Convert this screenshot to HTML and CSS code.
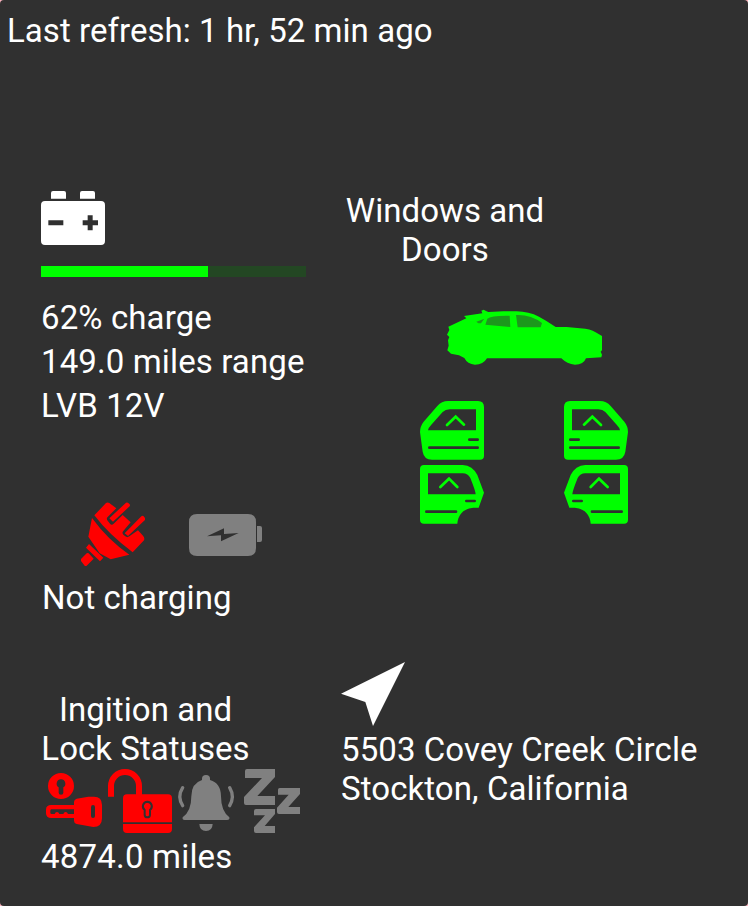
FILE: index.html
```html
<!DOCTYPE html>
<html lang="en">
<head>
<meta charset="utf-8">
<title>Vehicle status</title>
<link rel="stylesheet" href="styles.css">
</head>
<body>
<main class="widget">
  <header class="refresh">Last refresh: 1 hr, 52 min ago</header>
  <div class="columns">
    <div class="left">
      <section class="battery">
        <svg class="battery-icon" viewBox="33 33 192 162" fill="#fff">
          <path d="M63 56V39q0-6 6-6h33q6 0 6 6v17zM150 56V39q0-6 6-6h33q6 0 6 6v17z"/>
          <path fill-rule="evenodd" d="M45 63H213q12 0 12 12V183q0 12-12 12H45q-12 0-12-12V75q0-12 12-12zM55 121V136H100V121zM173 106V121H158V136H173V151H188V136H204V121H188V106z"/>
        </svg>
        <div class="bar"><div class="level" style="width:63%"></div></div>
        <div class="stats">
          <div>62% charge</div>
          <div>149.0 miles range</div>
          <div>LVB 12V</div>
        </div>
      </section>
      <section class="charging">
        <div class="charge-icons">
          <svg class="plug-icon" viewBox="33 36 192 192" fill="#f00">
            <path d="M73 76L108 39q5-3 10 0L139 55L113 81q-5 5 0 11L120 101q5 6 11 0L158 75L182 97L160 123q-5 5 0 11L166 139q6 5 12 0L204 121L219 137q6 6 3 14L188 187Q116 133 73 76z"/>
            <path d="M66 84Q114 150 178 194L122 208L89 190L55 140z"/>
            <path d="M118 85L168 38q4-2 7 1l4 4q2 3 0 6L129 95zM164 130L214 79q4-3 7 0l4 5q2 4-1 7L174 138z"/>
            <path d="M57 162L100 203L90 214L48 173zM50 190q3-2 6 0L71 206L50 227q-3 3-6 0L33 213q-2-3 0-6z"/>
          </svg>
          <svg class="cell-icon" viewBox="357 72 219 126" fill="#808080">
            <path fill-rule="evenodd" d="M381 72H534q24 0 24 24V174q0 24-24 24H381q-24 0-24-24V96q0-24 24-24zM411 139L453 136V154L506 129L462 132V115z"/>
            <path d="M561 108H570q6 0 6 6V150q0 6-6 6H561z"/>
          </svg>
        </div>
        <div class="charge-state">Not charging</div>
      </section>
      <section class="ignition">
        <h2 class="lock-title">Ingition and<br>Lock Statuses</h2>
        <svg class="status-icons" viewBox="18 27 777 192">
          <g fill="#f00">
            <path fill-rule="evenodd" d="M78 39a39 39 0 1 1 0 78a39 39 0 1 1 0-78zM78 58a13 13 0 0 0-7 24V98q0 6 7 6t7-6V82a13 13 0 0 0-7-24z"/>
            <path fill-rule="evenodd" d="M49 135H117V126q0-8 8-10L160 110H177q24 0 24 25V175q0 26-26 26L125 192q-8-2-8-10V174H49q-16 0-16-14V149q0-14 16-14zM50 148q-4 0-4 4v6q0 4 4 4h9q2-6 7-6t7 6h12q2-6 7-6t7 6H117V148zM168 142V168q0 6 6 6t6-6V142q0-7-6-7t-6 7z"/>
            <path d="M219 110V78a51 51 0 0 1 102 0V103H399q12 0 12 12V187H264V115q0-12 12-12H303V78a33 33 0 0 0-66 0V110zM264 192H411V207q0 12-12 12H276q-12 0-12-12z"/>
          </g>
          <path fill="#f00" stroke="#303030" stroke-width="6" d="M337 125a14 14 0 0 0-8 25V164q0 8 8 8t8-8V150a14 14 0 0 0-8-25z"/>
          <g fill="#808080" transform="translate(405)">
            <path d="M96 56q0-11 12-11t12 11v4q33 10 33 49q0 44 25 63q2 8-7 8H44q-8 0-6-8q26-18 26-63q0-39 32-49zM88 192H128q-1 21-20 21t-20-21z"/>
            <path fill="none" stroke="#808080" stroke-width="10" stroke-linecap="round" d="M38 83q-17 27 0 54M179 83q16 27 0 54"/>
            <path d="M231 27H315V51L262 108H315V135H228q-6 0-6-6V111L276 54H225V33q0-6 6-6zM329 84H390V102L355 141H390V162H327q-6 0-6-6V143L356 104H324V89q0-5 5-5zM258 147H315V162L284 198H315V219H258q-6 0-6-6V202L285 166H252V153q0-6 6-6z"/>
          </g>
        </svg>
        <div class="odometer">4874.0 miles</div>
      </section>
    </div>
    <div class="right">
      <section class="doors">
        <h2 class="doors-title">Windows and<br>Doors</h2>
        <svg class="car-icon" viewBox="0 0 540 225">
          <path fill="#0f0" d="M40 80L94 55L87 48L142 40L139 32L146 29L153 33L160 36L205 34H245Q281 35 312 50Q335 62 362 81L395 81L451 86Q475 90 492 103L501 108V151L497 155L501 164L499 172L453 175Q446 194 420 194Q396 192 379 175H156Q145 194 120 194Q97 192 88 174L72 166L48 161L37 151L41 137L39 121L43 111L36 104L43 90z"/>
          <path fill="#1c981c" d="M124 65L148 56L138 70H130zM157 56Q168 46 224 47L226 81L151 74zM243 45Q287 43 321 69L317 82H248z"/>
        </svg>
        <svg class="door-icons" viewBox="30 32 624 369">
          <defs>
            <g id="front">
              <path fill="#0f0" fill-rule="evenodd" d="M114 32H204q18 0 18 18V196q0 12-12 12H66Q42 208 38 184L30 125Q30 108 41 94L82 47Q95 32 114 32zM54 120H198V57H119Q106 57 98 65L64 103Q55 112 54 120z"/>
              <path fill="none" stroke="#303030" stroke-width="8" stroke-linecap="round" d="M178 148H203M58 172H203"/>
              <path class="chevron" d="M111 104L137 79L162 103"/>
            </g>
            <g id="rear">
              <path fill="#0f0" fill-rule="evenodd" d="M42 224H158Q188 226 202 254L222 307L206 352H190Q146 357 142 400H42q-12 0-12-12V236q0-12 12-12zM54 249V312H197Q197 303 181 263Q174 249 158 249z"/>
              <path fill="none" stroke="#303030" stroke-width="8" stroke-linecap="round" d="M169 332H194M49 364H138"/>
              <path class="chevron" d="M91 290L117 265L142 290"/>
            </g>
          </defs>
          <use href="#front"/><use href="#rear"/>
          <use href="#front" transform="translate(684) scale(-1 1)"/>
          <use href="#rear" transform="translate(684) scale(-1 1)"/>
        </svg>
      </section>
      <section class="location">
        <svg class="arrow-icon" viewBox="33 36 192 192" fill="#fff"><path d="M225 36L129 228L106 156L33 131z"/></svg>
        <address>5503 Covey Creek Circle<br>Stockton, California</address>
      </section>
    </div>
  </div>
</main>
</body>
</html>
```
FILE: styles.css
```css
* { box-sizing: border-box; }
body {
  margin: 0;
  background: #ffb6c1;
  font: 33px/39px Roboto, sans-serif;
  letter-spacing: 0.05px;
  color: #fff;
}
.widget {
  height: 906px;
  padding: 11px 0 0 7px;
  background: #303030;
  border-radius: 4px;
  overflow: hidden;
  white-space: nowrap;
}
svg { display: block; }
h2, address { margin: 0; font: inherit; }
.columns {
  display: grid;
  grid-template-columns: 300px 1fr;
  margin: 141px 0 0 34px;
}
.battery-icon { width: 64px; height: 54px; }
.bar {
  width: 265px;
  height: 11px;
  margin-top: 21px;
  background: #234723;
}
.level { height: 100%; background: #0f0; }
.stats { margin-top: 19px; line-height: 44px; letter-spacing: 0.12px; }
.charging { margin-top: 74px; }
.charge-icons {
  display: flex;
  align-items: flex-start;
  gap: 44px;
  padding-left: 40px;
  margin-bottom: 12px;
}
.plug-icon { width: 64px; height: 64px; }
.cell-icon { width: 73px; height: 42px; margin-top: 12px; }
.charge-state { padding-left: 1px; }
.ignition { margin-top: 73px; }
.lock-title { width: 209px; text-align: center; }
.status-icons { width: 259px; height: 64px; margin-top: 1px; }
.odometer { margin-top: 4px; letter-spacing: 0.2px; }
.doors-title { width: 208px; text-align: center; }
.car-icon { width: 180px; height: 75px; margin: 31px 0 0 94px; }
.door-icons { width: 208px; height: 123px; margin: 26px 0 0 79px; }
.chevron { fill: none; stroke: #0f0; stroke-width: 8px; stroke-linecap: round; }
.location { margin-top: 138px; }
.arrow-icon { width: 64px; height: 64px; margin-bottom: 4px; }
address { letter-spacing: 0.08px; }
```
